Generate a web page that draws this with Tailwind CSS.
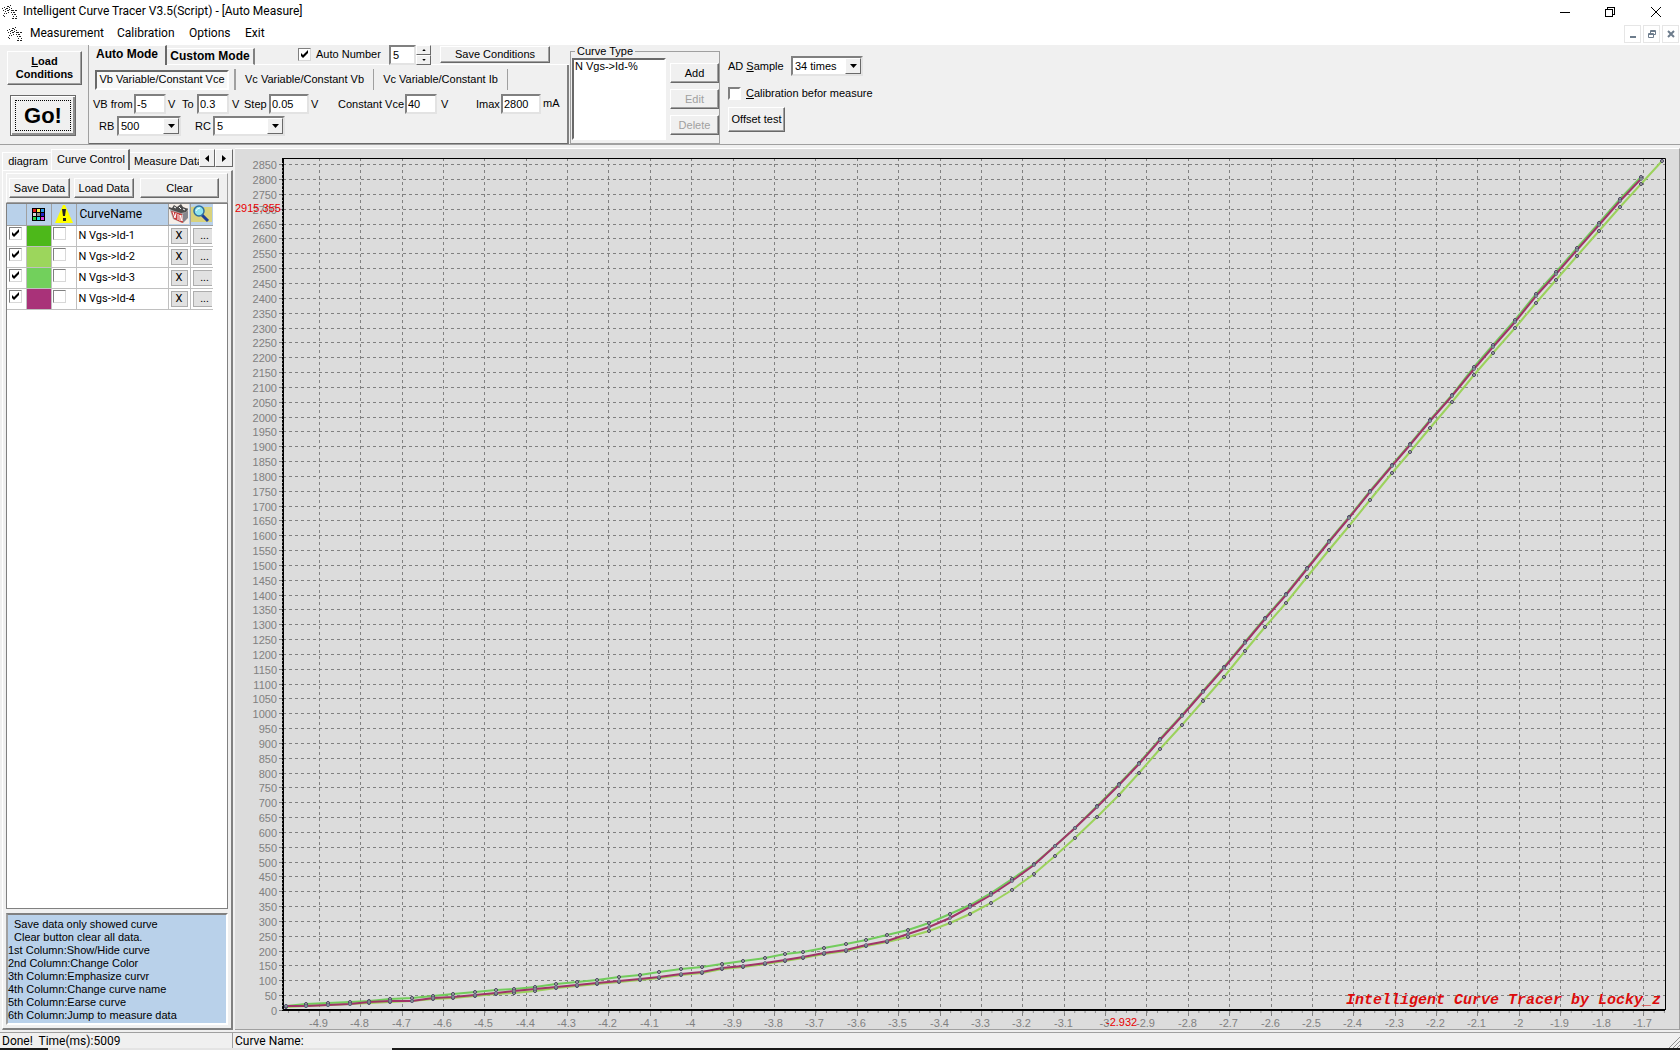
<!DOCTYPE html>
<html lang="en">
  <head>
    <meta charset="UTF-8" />
    <meta name="viewport" content="width=device-width, initial-scale=1.0">
    <title>Intelligent Curve Tracer V3.5(Script) - [Auto Measure]</title>
    <script src="https://cdn.jsdelivr.net/npm/@tailwindcss/browser@4"></script>
  </head>
  <body class="h-screen min-w-[900px] flex flex-col overflow-hidden bg-[#f0f0f0] text-black text-[11px] leading-[13px] font-['Liberation_Sans',sans-serif]">

    <svg class="hidden">
      <symbol id="app-icon" viewBox="0 0 16 16">
        <path stroke="#222" stroke-width="1" fill="none" shape-rendering="crispEdges"
          d="M0 4.5h1M1 6.5h1M2 9.5h1M1 11.5h1M2 3.5h1M3 5.5h1M4 4.5h2M3 7.5h1M2 12.5h1M4 9.5h1M5 2.5h2M5 6.5h2M7 3.5h1M8 1.5h1M7 5.5h1M9 4.5h1M6 8.5h1M9 6.5h3M9 8.5h1M10 10.5h1M11 8.5h2M11 12.5h1M10 14.5h2M13 6.5h2M12 10.5h2M14 12.5h1M13 14.5h2" />
      </symbol>
      <symbol id="arrow-down" viewBox="0 0 7 4"><path d="M0 0h7L3.5 4z" /></symbol>
    </svg>

    <!-- title bar -->
    <header class="bg-white font-[Roboto,sans-serif] text-[12px]">
      <div class="h-[23px] flex items-center justify-between pl-[2px]">
        <h1 class="flex items-center gap-[5px]">
          <svg class="w-4 h-4"><use href="#app-icon" /></svg>
          Intelligent Curve Tracer V3.5(Script) - [Auto Measure]
        </h1>
        <div class="flex">
          <button class="w-[45px] h-[20px] flex items-center justify-center" aria-label="Minimize">
            <svg class="w-[10px] h-[10px]" viewBox="0 0 10 10" stroke="#000" shape-rendering="crispEdges"><path d="M0 5.5h10" /></svg>
          </button>
          <button class="w-[45px] h-[20px] flex items-center justify-center" aria-label="Restore">
            <svg class="w-[10px] h-[10px]" viewBox="0 0 10 10" fill="none" stroke="#000" shape-rendering="crispEdges"><path d="M0.5 2.5h7v7h-7zM2.5 2.5v-2h7v7h-2" /></svg>
          </button>
          <button class="w-[48px] h-[20px] flex items-center justify-center" aria-label="Close">
            <svg class="w-[10px] h-[10px]" viewBox="0 0 10 10" stroke="#000"><path d="M0 0l10 10M10 0l-10 10" /></svg>
          </button>
        </div>
      </div>

      <!-- menu -->
      <nav class="h-[21px] flex items-center justify-between pl-[7px]">
        <ul class="flex items-center">
          <li class="mr-[7px]"><svg class="w-4 h-4"><use href="#app-icon" /></svg></li>
          <li class="w-[87px]"><a href="#">Measurement</a></li>
          <li class="w-[72px]"><a href="#">Calibration</a></li>
          <li class="w-[56px]"><a href="#">Options</a></li>
          <li><a href="#">Exit</a></li>
        </ul>
        <div class="flex gap-[2px] pr-px">
          <button class="w-[17px] h-[18px] border border-[#e6e6e6] flex items-center justify-center" aria-label="Minimize child">
            <svg class="w-2 h-2" viewBox="0 0 8 8"><path d="M1 6h6v2H1z" fill="#6d7c8c" /></svg>
          </button>
          <button class="w-[17px] h-[18px] border border-[#e6e6e6] flex items-center justify-center" aria-label="Restore child">
            <svg class="w-2 h-2" viewBox="0 0 8 8" fill="none" stroke="#6d7c8c"><path d="M0.5 3.5h5v4h-5zM0.5 4.5h5M2.5 3V0.5h5v4H6M2.5 1.5h5" /></svg>
          </button>
          <button class="w-[17px] h-[18px] border border-[#e6e6e6] flex items-center justify-center" aria-label="Close child">
            <svg class="w-2 h-2" viewBox="0 0 8 8" stroke="#6d7c8c" stroke-width="2"><path d="M1 1l6 6M7 1l-6 6" /></svg>
          </button>
        </div>
      </nav>
    </header>

    <!-- toolbar -->
    <section class="h-[101px] flex shrink-0 border-t border-white border-b border-b-[#a0a0a0]">
      <div class="w-[88px] shrink-0 pt-[6px] pl-[7px]">
        <button class="w-[75px] h-[34px] border border-t-white border-l-white border-r-[#696969] border-b-[#696969] shadow-[inset_-1px_-1px_0_#a0a0a0] font-bold"><u>L</u>oad<br>Conditions</button>
        <button class="block w-[66px] h-[41px] mt-[10px] ml-[3px] border border-[#696969] shadow-[inset_1px_1px_0_#fff,inset_-2px_-2px_0_#909090] p-[4px]">
          <span class="h-full flex items-center justify-center border border-dotted border-black text-[22px] leading-[22px] font-bold">Go!</span>
        </button>
      </div>

      <div class="w-[481px] shrink-0 border-l border-[#a0a0a0] flex flex-col">
        <div class="flex h-[20px] items-end">
          <button class="w-[78px] h-[20px] pb-[2px] border-t border-t-white border-r-2 border-r-[#696969] font-bold text-[12px]">Auto Mode</button>
          <button class="w-[88px] h-[17px] border-t border-t-white border-r-2 border-r-[#808080] border-b border-b-white font-bold text-[12px]">Custom Mode</button>
          <div class="flex-1 h-[20px] flex items-center border-b border-white pl-[43px]">
            <label class="flex items-center gap-[5px] w-[91px] whitespace-nowrap">
              <span class="relative block">
                <input type="checkbox" checked class="peer block appearance-none w-[13px] h-[13px] bg-white border border-t-[#808080] border-l-[#808080] border-r-[#d8d8d8] border-b-[#d8d8d8]" />
                <svg class="hidden peer-checked:block absolute left-px top-px w-[11px] h-[11px]" viewBox="0 0 11 11"><path d="M2 4v3l2 2 5-5V1L4 6z" /></svg>
              </span>
              Auto Number
            </label>
            <input type="text" value="5" aria-label="Number" class="w-[27px] h-[20px] pl-[2px] bg-white border-2 border-t-[#808080] border-l-[#808080] border-r-[#e3e3e3] border-b-[#e3e3e3]" />
            <div class="flex flex-col w-[15px] h-[20px]">
              <button class="flex-1 flex items-center justify-center border border-t-white border-l-white border-r-[#696969] border-b-[#696969]" aria-label="Up"><svg class="w-[4px] h-[2px] rotate-180"><use href="#arrow-down" /></svg></button>
              <button class="flex-1 flex items-center justify-center border border-t-white border-l-white border-r-[#696969] border-b-[#696969]" aria-label="Down"><svg class="w-[4px] h-[2px]"><use href="#arrow-down" /></svg></button>
            </div>
            <button class="w-[110px] h-[17px] ml-[9px] border border-t-white border-l-white border-r-[#696969] border-b-[#696969] shadow-[inset_-1px_-1px_0_#a0a0a0]">Save Conditions</button>
          </div>
        </div>
        <div class="flex-1 pt-[4px] border-r-2 border-r-[#808080] border-b border-b-[#696969]">
          <div class="flex items-center h-[21px] pl-[6px]">
            <button class="w-[134px] h-[20px] bg-[#f8f8f8] border-2 border-t-[#696969] border-l-[#696969] border-r-white border-b-white whitespace-nowrap">Vb Variable/Constant Vce</button>
            <button class="w-[139px] h-[21px] ml-[5px] border-l-2 border-[#a0a0a0] whitespace-nowrap">Vc Variable/Constant Vb</button>
            <button class="w-[135px] h-[21px] border-x border-[#a0a0a0] whitespace-nowrap">Vc Variable/Constant Ib</button>
          </div>
          <div class="flex items-center mt-[4px] pl-[4px] whitespace-nowrap">
            <label for="vb-from" class="w-[41px]">VB from</label>
            <input id="vb-from" type="text" value="-5" class="w-[32px] h-[20px] pl-px bg-white border-2 border-t-[#808080] border-l-[#808080] border-r-[#e3e3e3] border-b-[#e3e3e3]" />
            <span class="w-[16px] pl-[2px]">V</span>
            <label for="vb-to" class="w-[15px]">To</label>
            <input id="vb-to" type="text" value="0.3" class="w-[32px] h-[20px] pl-px bg-white border-2 border-t-[#808080] border-l-[#808080] border-r-[#e3e3e3] border-b-[#e3e3e3]" />
            <span class="w-[15px] pl-[3px]">V</span>
            <label for="vb-step" class="w-[25px]">Step</label>
            <input id="vb-step" type="text" value="0.05" class="w-[40px] h-[20px] pl-px bg-white border-2 border-t-[#808080] border-l-[#808080] border-r-[#e3e3e3] border-b-[#e3e3e3]" />
            <span class="w-[29px] pl-[2px]">V</span>
            <label for="vce" class="w-[67px]">Constant Vce</label>
            <input id="vce" type="text" value="40" class="w-[32px] h-[20px] pl-px bg-white border-2 border-t-[#808080] border-l-[#808080] border-r-[#e3e3e3] border-b-[#e3e3e3]" />
            <span class="w-[39px] pl-[4px]">V</span>
            <label for="imax" class="w-[25px]">Imax</label>
            <input id="imax" type="text" value="2800" class="w-[40px] h-[20px] pl-px bg-white border-2 border-t-[#808080] border-l-[#808080] border-r-[#e3e3e3] border-b-[#e3e3e3]" />
            <span class="pl-[2px] pb-[2px]">mA</span>
          </div>
          <div class="flex items-center mt-[2px] pl-[10px]">
            <label for="rb" class="w-[18px]">RB</label>
            <div class="relative w-[64px]">
              <select id="rb" class="appearance-none w-full h-[20px] pl-[2px] bg-white border-2 border-t-[#808080] border-l-[#808080] border-r-[#e3e3e3] border-b-[#e3e3e3]"><option>500</option></select>
              <span class="pointer-events-none absolute right-[2px] top-[2px] w-[16px] h-[16px] flex items-center justify-center bg-[#f0f0f0] border border-t-white border-l-white border-r-[#696969] border-b-[#696969]"><svg class="w-[7px] h-[4px]"><use href="#arrow-down" /></svg></span>
            </div>
            <label for="rc" class="w-[18px] ml-[14px]">RC</label>
            <div class="relative w-[72px]">
              <select id="rc" class="appearance-none w-full h-[20px] pl-[2px] bg-white border-2 border-t-[#808080] border-l-[#808080] border-r-[#e3e3e3] border-b-[#e3e3e3]"><option>5</option></select>
              <span class="pointer-events-none absolute right-[2px] top-[2px] w-[16px] h-[16px] flex items-center justify-center bg-[#f0f0f0] border border-t-white border-l-white border-r-[#696969] border-b-[#696969]"><svg class="w-[7px] h-[4px]"><use href="#arrow-down" /></svg></span>
            </div>
          </div>
        </div>
      </div>

      <fieldset class="w-[150px] shrink-0 ml-px border border-[#a0a0a0] pl-px">
        <legend class="ml-[3px] px-[2px]">Curve Type</legend>
        <div class="flex justify-between">
          <select size="5" aria-label="Curve Type" class="appearance-none w-[94px] h-[82px] bg-white border-2 border-t-[#696969] border-l-[#696969] border-r-white border-b-white overflow-hidden">
            <option class="p-0 pl-px">N Vgs-&gt;Id-%</option>
          </select>
          <div class="flex flex-col gap-[6px] pt-[5px]">
            <button class="w-[49px] h-[20px] border border-t-white border-l-white border-r-[#696969] border-b-[#696969] shadow-[inset_-1px_-1px_0_#a0a0a0]">Add</button>
            <button disabled class="w-[49px] h-[20px] text-[#a0a0a0] border border-t-white border-l-white border-r-[#696969] border-b-[#696969] shadow-[inset_-1px_-1px_0_#a0a0a0]">Edit</button>
            <button disabled class="w-[49px] h-[20px] text-[#a0a0a0] border border-t-white border-l-white border-r-[#696969] border-b-[#696969] shadow-[inset_-1px_-1px_0_#a0a0a0]">Delete</button>
          </div>
        </div>
      </fieldset>

      <div class="flex flex-col items-start pt-[11px] pl-[8px]">
        <div class="flex items-center">
          <label for="sample" class="w-[63px] whitespace-nowrap">AD <u>S</u>ample</label>
          <div class="relative w-[72px]">
            <select id="sample" class="appearance-none w-full h-[20px] pl-[2px] bg-white border-2 border-t-[#808080] border-l-[#808080] border-r-[#e3e3e3] border-b-[#e3e3e3]"><option>34 times</option></select>
            <span class="pointer-events-none absolute right-[2px] top-[2px] w-[16px] h-[16px] flex items-center justify-center bg-[#f0f0f0] border border-t-white border-l-white border-r-[#696969] border-b-[#696969]"><svg class="w-[7px] h-[4px]"><use href="#arrow-down" /></svg></span>
          </div>
        </div>
        <label class="flex items-center gap-[5px] mt-[11px]">
          <input type="checkbox" class="appearance-none w-[13px] h-[13px] border-2 border-t-[#808080] border-l-[#808080] border-r-white border-b-white bg-white" />
          <span><u>C</u>alibration befor measure</span>
        </label>
        <button class="w-[57px] h-[25px] mt-[7px] border border-t-white border-l-white border-r-[#696969] border-b-[#696969] shadow-[inset_-1px_-1px_0_#a0a0a0]">Offset test</button>
      </div>
    </section>

    <main class="flex-1 min-h-0 flex pt-[3px]">

      <!-- left panel -->
      <aside class="w-[235px] shrink-0 flex flex-col pl-[2px] pr-[2px] pt-px">
        <div class="flex items-end h-[21px]">
          <button class="w-[49px] h-[18px] pl-[2px] border-t border-l border-white">diagram</button>
          <button class="w-[79px] h-[21px] pb-[2px] pl-[2px] border-t border-l border-white border-r-2 border-r-[#696969] whitespace-nowrap">Curve Control</button>
          <button class="w-[69px] h-[18px] pl-[4px] border-t border-white text-left whitespace-nowrap overflow-hidden">Measure Data</button>
          <div class="self-start flex">
            <button class="w-[16px] h-[18px] flex items-center justify-center border border-t-white border-l-white border-r-[#696969] border-b-[#696969]" aria-label="Scroll left"><svg class="w-[4px] h-[7px]" viewBox="0 0 4 7"><path d="M4 0v7L0 3.5z" /></svg></button>
            <button class="w-[18px] h-[18px] flex items-center justify-center border border-t-white border-l-white border-r-[#696969] border-b-[#696969]" aria-label="Scroll right"><svg class="w-[4px] h-[7px]" viewBox="0 0 4 7"><path d="M0 0v7l4-3.5z" /></svg></button>
          </div>
        </div>
        <div class="flex-1 min-h-0 flex flex-col p-[3px] pt-[2px] border-t border-l border-white border-r-2 border-r-[#808080] border-b-2 border-b-[#808080]">
          <div class="flex h-[30px] items-center pl-[2px] border border-t-white border-l-white border-[#a0a0a0]">
            <button class="w-[61px] h-[20px] mr-[4px] border border-t-white border-l-white border-r-[#696969] border-b-[#696969] shadow-[inset_-1px_-1px_0_#a0a0a0]">Save Data</button>
            <button class="w-[60px] h-[20px] mr-[6px] border border-t-white border-l-white border-r-[#696969] border-b-[#696969] shadow-[inset_-1px_-1px_0_#a0a0a0]">Load Data</button>
            <button class="w-[79px] h-[20px] border border-t-white border-l-white border-r-[#696969] border-b-[#696969] shadow-[inset_-1px_-1px_0_#a0a0a0]">Clear</button>
          </div>
          <div class="flex-1 min-h-0 bg-white border border-[#808080]">
            <table class="w-[206px] table-fixed border-collapse font-[Roboto,sans-serif]">
              <thead>
                <tr class="h-[21px] bg-[#b9d1ea]">
                  <th class="w-[19px] border border-t-0 border-l-0 border-[#a0a0a0]" aria-label="Show"></th>
                  <th class="w-[25px] border border-t-0 border-[#a0a0a0] p-0" aria-label="Color">
                    <svg class="w-[13px] h-[13px] mx-auto" viewBox="0 0 13 13" shape-rendering="crispEdges">
                      <path d="M0 0h13v13H0z" />
                      <path d="M1 1h3v3H1z" fill="#e02020" /><path d="M5 1h3v3H5z" fill="#fff04a" /><path d="M9 1h3v3H9z" fill="#2f9be8" />
                      <path d="M1 5h3v3H1z" fill="#d8d8d8" /><path d="M5 5h3v3H5z" fill="#909090" /><path d="M9 5h3v3H9z" fill="#2424c8" />
                      <path d="M1 9h3v3H1z" fill="#30d840" /><path d="M5 9h3v3H5z" fill="#20d8e8" /><path d="M9 9h3v3H9z" fill="#e040e0" />
                    </svg>
                  </th>
                  <th class="w-[25px] border border-t-0 border-[#a0a0a0] p-0" aria-label="Emphasize">
                    <svg class="w-[20px] h-[20px] mx-auto" viewBox="0 0 20 20"><path d="M9 1h2l8 18H1z" fill="#ffff00" /><path d="M8 5h4l-1 7H9zM9 14h3v3H9z" fill="#222" /></svg>
                  </th>
                  <th class="w-[92px] border border-t-0 border-[#a0a0a0] p-0 pl-[3px] text-left font-normal text-[12px]">CurveName</th>
                  <th class="w-[22px] border border-t-0 border-[#a0a0a0] p-0" aria-label="Erase">
                    <svg class="w-[20px] h-[20px]" viewBox="0 0 20 20">
                      <path d="M0 0h20v20H0z" fill="#f4eee8" />
                      <path d="M1 6l5-3 6 3 7-2v9l-6 6-9-4z" fill="#a8a4a4" />
                      <path d="M0 3l3 1 2-3 3 2 4-3 2 3 5 2-2 3-5 1-9-3-3-1z" fill="#4c4c4c" />
                      <path d="M5 3l2 1M10 3l2 2M14 5l2 1" stroke="#fff" />
                      <path d="M2 7l11 3 1 9-9-4z" fill="#c83a3a" />
                      <path d="M4 8l2 6 1-5M9 10v6M11 17v-6l2 6v-6" stroke="#fff" fill="none" />
                      <path d="M14 10l5-3v7l-5 5z" fill="#86868c" />
                    </svg>
                  </th>
                  <th class="w-[23px] border border-t-0 border-r-0 border-[#a0a0a0] p-0" aria-label="Jump">
                    <svg class="w-[21px] h-[20px]" viewBox="0 0 21 20">
                      <path d="M0 3l8-1 2 1h11v15H0z" fill="#d8d27c" />
                      <path d="M11 11l6 6" stroke="#1f3f98" stroke-width="3" />
                      <circle cx="8" cy="7" r="5" fill="#8fe4ee" stroke="#2f6fa0" stroke-width="1.5" />
                      <path d="M5 7q1-3 4-3" stroke="#fff" fill="none" />
                    </svg>
                  </th>
                </tr>
              </thead>
              <tbody id="curves"></tbody>
            </table>
          </div>
          <div class="h-[112px] shrink-0 mt-[4px] pt-[3px] bg-[#b9d1ea] border-2 border-t-[#808080] border-l-[#a0a0a0] border-r-white border-b-white">
            <p class="pl-[6px]">Save data only showed curve</p>
            <p class="pl-[6px]">Clear button clear all data.</p>
            <p>1st Column:Show/Hide curve</p>
            <p>2nd Column:Change Color</p>
            <p>3th Column:Emphasize curvr</p>
            <p>4th Column:Change curve name</p>
            <p>5th Column:Earse curve</p>
            <p>6th Column:Jump to measure data</p>
          </div>
        </div>
      </aside>

      <!-- chart -->
      <div class="flex-1 min-w-0 bg-[#dcdcdc] border-t border-t-white border-r border-b border-[#a0a0a0]">
        <svg id="chart" class="block w-full h-full" viewBox="235 149 1444 880"></svg>
      </div>
    </main>

    <!-- status bar -->
    <footer class="shrink-0 pt-[2px] font-[Roboto,sans-serif] text-[12px]">
      <div class="flex h-[16px] items-end border-t border-[#a0a0a0]">
        <p class="w-[232px] pl-[2px] whitespace-pre">Done!  Time(ms):5009</p>
        <p class="flex-1 h-full flex items-end pl-[2px] border-l border-[#a0a0a0]">Curve Name:</p>
        <svg class="w-[12px] h-[12px]" viewBox="0 0 12 12" stroke="#909090"><path d="M1 12L12 1M5 12l7-7M9 12l3-3" /></svg>
      </div>
      <div class="h-[2px] flex bg-[#1a1a1a]"><div class="ml-[48px] w-[344px] bg-[#e4e4e4]"></div></div>
    </footer>

    <script>
      const curves = [
        ['N Vgs->Id-1', 'bg-[#4db81a]'],
        ['N Vgs->Id-2', 'bg-[#9cd65c]'],
        ['N Vgs->Id-3', 'bg-[#72d05c]'],
        ['N Vgs->Id-4', 'bg-[#a93279]']
      ];
      document.getElementById('curves').innerHTML = curves.map(([name, color]) => `
        <tr class="h-[21px]">
          <td class="border border-l-0 border-[#c0c0c0] p-0 pl-[2px]">
            <label class="relative block w-[13px] h-[13px] mb-[4px]">
              <input type="checkbox" checked aria-label="Show ${name}" class="peer block appearance-none w-[13px] h-[13px] bg-white border border-t-[#808080] border-l-[#808080] border-r-[#d8d8d8] border-b-[#d8d8d8]">
              <svg class="hidden peer-checked:block absolute left-px top-px w-[11px] h-[11px]" viewBox="0 0 11 11"><path d="M2 4v3l2 2 5-5V1L4 6z" /></svg>
            </label>
          </td>
          <td class="border border-[#c0c0c0] p-0 ${color}"></td>
          <td class="border border-[#c0c0c0] p-0 pl-px"><input type="checkbox" aria-label="Emphasize ${name}" class="block mb-[4px] appearance-none w-[13px] h-[13px] bg-white border border-t-[#808080] border-l-[#808080] border-r-[#d8d8d8] border-b-[#d8d8d8]"></td>
          <td class="border border-[#c0c0c0] p-0 pl-[2px]">${name.replace('>', '&gt;')}</td>
          <td class="border border-[#c0c0c0] p-0"><button class="block mx-auto w-[17px] h-[16px] bg-[#e1e1e1] border border-[#adadad]">X</button></td>
          <td class="border border-r-0 border-[#c0c0c0] p-0"><button class="block ml-[2px] w-[19px] h-[16px] pl-[4px] bg-[#e1e1e1] border border-r-0 border-[#adadad]">...</button></td>
        </tr>`).join('');

      // sample positions and the three visible traces
      const xs = [286,306,328,350,369,390,412,433,453,475,496,514,535,556,577,597,619,640,659,681,702,722,743,765,785,803,824,846,866,887,908,929,950,970,991,1012,1034,1055,1075,1097,1119,1139,1160,1182,1203,1224,1245,1265,1286,1307,1329,1349,1370,1392,1410,1430,1452,1474,1493,1515,1536,1556,1577,1599,1620,1641,1662];
      const green = [1006,1004,1003,1002,1001,999,998,996,994,992,990,989,987,984,982,980,977,975,972,969,967,964,961,958,954,952,948,944,940,935,930,923,914,905,893,879,864,846,828,806,784,763,739,715,691,667,642,618,594,568,541,517,491,465,444,420,395,367,345,320,294,272,248,223,199,177];
      const purple = [1006,1006,1005,1004,1002,1001,1001,998,997,995,993,991,989,987,985,983,981,979,977,974,972,968,966,963,960,957,953,950,945,941,934,927,918,907,895,881,865,846,828,807,785,764,740,716,692,668,643,619,595,569,542,518,492,466,445,421,396,369,347,322,296,274,250,225,201,179];
      const light = [1007,1006,1005,1004,1003,1002,1001,999,998,996,994,993,991,988,986,984,982,980,978,975,973,969,967,964,961,958,954,951,946,942,937,931,923,914,903,890,874,856,838,817,795,773,749,725,701,677,651,627,603,577,550,526,500,473,452,428,402,375,353,328,303,280,256,231,207,184,161];

      const plot = { left: 283, right: 1665, top: 158, bottom: 1010 };
      const yOf = v => Math.round(plot.bottom - v * 845.7 / 2850) + 0.5;
      const xOf = v => Math.round(318.8 + (v + 4.9) * 413.8) + 0.5;
      let out = '';

      for (let v = 0; v <= 2850; v += 50) {
        const y = yOf(v);
        if (v) out += `<path class="stroke-[#808080]" stroke-dasharray="3 3" d="M${plot.left} ${y}H${plot.right}"/>`;
        out += `<path class="stroke-[#808080]" d="M${plot.left - 4} ${y}h3"/>`;
        out += `<text class="fill-[#808080] text-[11px]" text-anchor="end" x="277" y="${y + 4}">${v}</text>`;
      }
      for (let i = 0; i <= 32; i++) {
        const v = (i - 49) / 10, x = xOf(v);
        out += `<path class="stroke-[#808080]" stroke-dasharray="3 3" d="M${x} ${plot.top}V${plot.bottom}"/>`;
        out += `<path class="stroke-[#808080]" d="M${x} ${plot.bottom + 1}v5"/>`;
        out += `<text class="fill-[#808080] text-[11px]" text-anchor="middle" x="${x - 1}" y="1027">${v}</text>`;
      }
      out += `<path class="fill-none stroke-black" stroke-width="2" d="M${plot.left} ${plot.top}V${plot.bottom}H${plot.right}"/>`;
      out += `<path class="fill-none stroke-black" d="M${plot.left} ${plot.top + 0.5}H${plot.right + 0.5}V${plot.bottom}"/>`;
      // minor ticks
      out += `<path class="stroke-[#909090]" stroke-width="2" stroke-dasharray="1 9.345" d="M288 ${plot.bottom + 2}H${plot.right}"/>`;
      out += `<path class="stroke-[#b8b8b8]" stroke-dasharray="1 2.71" d="M282.5 ${plot.top + 5}V${plot.bottom}"/>`;

      const line = (ys, cls) => `<polyline class="fill-none ${cls}" stroke-width="2" points="${ys.map((y, i) => xs[i] + ',' + y).join(' ')}"/>`;
      const dots = ys => ys.map((y, i) => `<circle class="fill-[#b4b4b4] stroke-[#45405c]" cx="${xs[i]}" cy="${y}" r="1.5"/>`).join('');
      out += line(light, 'stroke-[#9cd25c]') + line(green, 'stroke-[#72cc5c]') + line(purple, 'stroke-[#a03468]');
      out += dots(light) + dots(green);
      out += purple.map((y, i) => `<circle class="fill-[#8c9c98] stroke-[#5c5878]" stroke-width="0.7" cx="${xs[i]}" cy="${y}" r="1.5"/>`).join('');

      // cursor readouts
      out += `<text class="fill-[#e80000] text-[11px]" x="235" y="212">2915.355</text>`;
      out += `<text class="fill-[#e80000] text-[11px]" x="1106" y="1026">-2.932</text>`;
      out += `<text class="fill-[#dc0c0c] text-[15px] font-bold italic font-['Liberation_Mono',monospace]" text-anchor="end" x="1661" y="1004">Intelligent Curve Tracer by Locky_z</text>`;
      document.getElementById('chart').innerHTML = out;
    </script>
  </body>
</html>
